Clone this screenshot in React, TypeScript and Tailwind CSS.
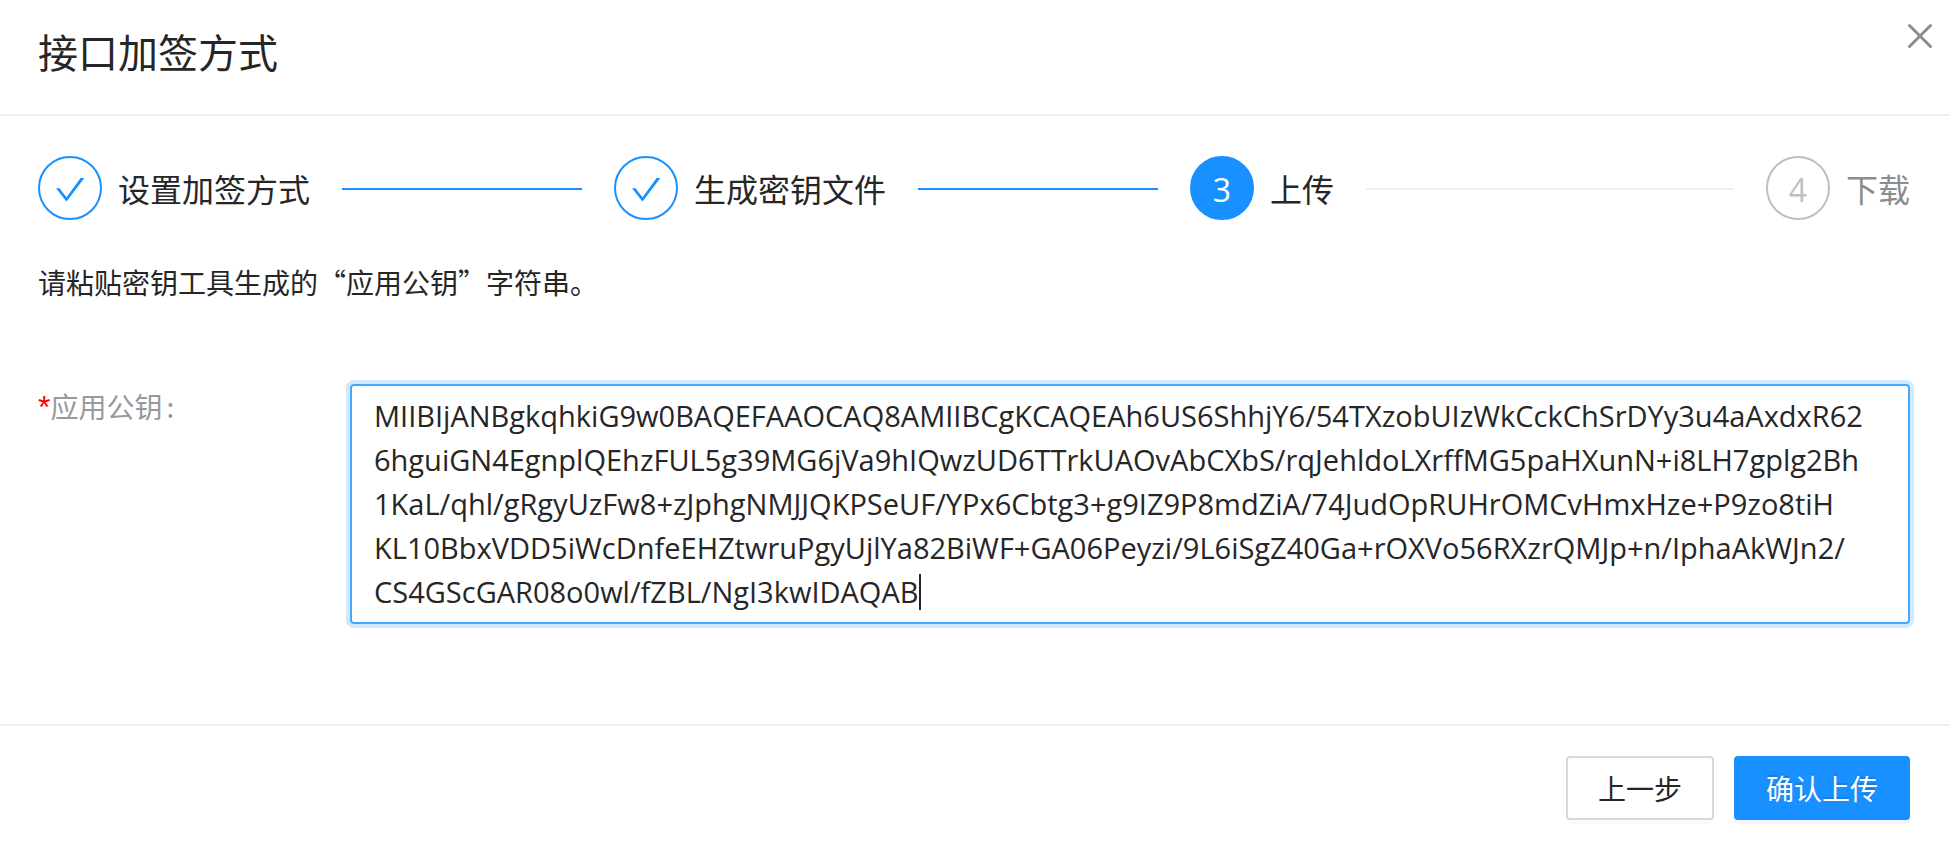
import { useState } from "react"

const publicKey =
  "MIIBIjANBgkqhkiG9w0BAQEFAAOCAQ8AMIIBCgKCAQEAh6US6ShhjY6/54TXzobUIzWkCckChSrDYy3u4aAxdxR62\n" +
  "6hguiGN4EgnplQEhzFUL5g39MG6jVa9hIQwzUD6TTrkUAOvAbCXbS/rqJehldoLXrffMG5paHXunN+i8LH7gplg2Bh\n" +
  "1KaL/qhl/gRgyUzFw8+zJphgNMJJQKPSeUF/YPx6Cbtg3+g9IZ9P8mdZiA/74JudOpRUHrOMCvHmxHze+P9zo8tiH\n" +
  "KL10BbxVDD5iWcDnfeEHZtwruPgyUjlYa82BiWF+GA06Peyzi/9L6iSgZ40Ga+rOXVo56RXzrQMJp+n/IphaAkWJn2/\n" +
  "CS4GScGAR08o0wl/fZBL/NgI3kwIDAQAB"

const steps = ["设置加签方式", "生成密钥文件", "上传", "下载"]
const current = 2

const Check = () => (
  <svg
    width="32"
    height="32"
    viewBox="16 16 32 32"
    fill="currentColor"
    aria-hidden="true"
  >
    <path d="M42.600 22h3.700L29.200 44.800q-.7.900-1.400 0L18 32.300h3.600l6.900 8.900z" />
  </svg>
)

const Close = () => (
  <svg
    width="32"
    height="32"
    viewBox="0 0 32 32"
    fill="none"
    stroke="currentColor"
    strokeWidth="3"
    strokeLinecap="round"
    aria-hidden="true"
  >
    <path d="M5.500 5.500l21 21M26.500 5.500l-21 21" />
  </svg>
)

const Step = ({ title, index }: { title: string; index: number }) => {
  const done = index < current
  const active = index === current
  const last = index === steps.length - 1
  const circle = done
    ? "border-[#1890ff] text-[#1890ff]"
    : active
      ? "border-[#1890ff] bg-[#1890ff] pt-1 text-white"
      : "border-[#bfbfbf] pt-1 text-[#bfbfbf]"

  return (
    <li
      className={`flex items-center ${last ? "flex-none" : "flex-1"}`}
      aria-current={active ? "step" : undefined}
    >
      <span
        className={`flex h-16 w-16 shrink-0 items-center justify-center rounded-full border-2 text-[32px] leading-none font-[Open_Sans] ${circle}`}
      >
        {done ? <Check /> : index + 1}
      </span>
      <span
        className={`ml-4 shrink-0 text-[32px] leading-16 ${
          done || active ? "text-[#262626]" : "text-[#8c8c8c]"
        }`}
      >
        {title}
      </span>
      {!last && (
        <span
          className={`mx-8 mt-0.5 h-0.5 flex-1 ${done ? "bg-[#1890ff]" : "bg-[#eeeeee]"}`}
        />
      )}
    </li>
  )
}

const App = () => {
  const [value, setValue] = useState(publicKey)

  return (
    <div
      role="dialog"
      aria-labelledby="title"
      className="flex min-h-screen w-full flex-col bg-white font-['Noto_Sans_CJK_SC',sans-serif] text-[28px] leading-11 text-[#262626]"
    >
      <header className="flex items-start justify-between border-b-2 border-[#eeeeee] pt-[22px] pr-3.5 pb-[34px] pl-[38px]">
        <h1 id="title" className="text-[40px] leading-[58px]">
          接口加签方式
        </h1>
        <button
          type="button"
          aria-label="关闭"
          className="-mt-0.5 cursor-pointer text-[#8c8c8c] hover:text-[#262626]"
        >
          <Close />
        </button>
      </header>

      <main className="flex-1 px-10 pt-10 pl-[38px]">
        <ol className="flex">
          {steps.map((title, i) => (
            <Step key={title} title={title} index={i} />
          ))}
        </ol>
        <p className="mt-10">请粘贴密钥工具生成的“应用公钥”字符串。</p>
        <div className="mt-20 flex items-start">
          <label htmlFor="key" className="w-[312px] shrink-0 text-[#999999]">
            <span className="font-[Liberation_Sans] text-[32px] text-[#ff0000]">*</span>
            应用公钥<span className="ml-1">:</span>
          </label>
          <div className="relative min-w-0 flex-1">
            <textarea
              id="key"
              rows={5}
              spellCheck={false}
              value={value}
              onChange={(e) => setValue(e.target.value)}
              className="block w-full resize-none overflow-hidden rounded-sm border-2 border-[#40a9ff] px-[22px] py-2 font-['Open_Sans','Noto_Sans_CJK_SC',sans-serif] text-[29px] leading-11 whitespace-pre caret-transparent shadow-[0_0_0_4px_rgba(24,144,255,0.2)] outline-none"
            />
            {/* text cursor */}
            <span className="pointer-events-none absolute bottom-3.5 left-[569px] h-9 w-0.5 bg-[#262626]" />
          </div>
        </div>
      </main>

      <footer className="flex justify-end gap-5 border-t-2 border-[#eeeeee] pt-[30px] pr-10 pb-[25px]">
        <button
          type="button"
          className="h-16 cursor-pointer rounded-sm border-2 border-[#d9d9d9] bg-white px-[30px] shadow-[0_4px_0_rgba(0,0,0,0.02)]"
        >
          上一步
        </button>
        <button
          type="button"
          className="h-16 cursor-pointer rounded-sm border-2 border-[#1890ff] bg-[#1890ff] px-[30px] text-white shadow-[0_4px_0_rgba(0,0,0,0.04)] text-shadow-[0_-2px_0_rgba(0,0,0,0.12)]"
        >
          确认上传
        </button>
      </footer>
    </div>
  )
}

export default App
